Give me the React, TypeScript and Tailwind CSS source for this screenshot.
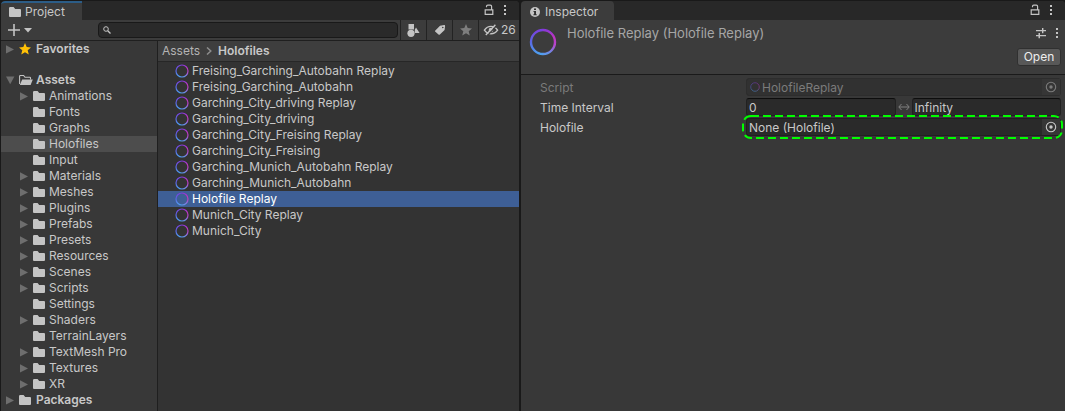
import React from "react";

type Folder = { name: string; children?: boolean };

const folders: Folder[] = [
  { name: "Animations", children: true },
  { name: "Fonts" },
  { name: "Graphs" },
  { name: "Holofiles" },
  { name: "Input" },
  { name: "Materials", children: true },
  { name: "Meshes", children: true },
  { name: "Plugins", children: true },
  { name: "Prefabs", children: true },
  { name: "Presets", children: true },
  { name: "Resources", children: true },
  { name: "Scenes", children: true },
  { name: "Scripts", children: true },
  { name: "Settings" },
  { name: "Shaders", children: true },
  { name: "TerrainLayers" },
  { name: "TextMesh Pro", children: true },
  { name: "Textures", children: true },
  { name: "XR", children: true },
];

const files = [
  "Freising_Garching_Autobahn Replay",
  "Freising_Garching_Autobahn",
  "Garching_City_driving Replay",
  "Garching_City_driving",
  "Garching_City_Freising Replay",
  "Garching_City_Freising",
  "Garching_Munich_Autobahn Replay",
  "Garching_Munich_Autobahn",
  "Holofile Replay",
  "Munich_City Replay",
  "Munich_City",
];

function FolderIcon() {
  return (
    <svg className="h-3 w-3 shrink-0" viewBox="0 0 12 12" fill="#c4c4c4" aria-hidden="true">
      <path d="M0 2.2Q0 1 1.2 1H4.6L6.2 3H11Q12 3 12 4V10Q12 11 11 11H1Q0 11 0 10Z" />
    </svg>
  );
}

function OpenFolderIcon() {
  return (
    <svg className="h-3 w-3.5 shrink-0" viewBox="0 0 14 12" aria-hidden="true">
      <path d="M.6 10V2.2Q.6 1.5 1.3 1.5H4.6L6 3.3H10.8Q11.5 3.3 11.5 4V5.5" fill="none" stroke="#c4c4c4" strokeWidth="1.1" />
      <path d="M3.2 5.4H13.8L11.6 11H.8Z" fill="#c4c4c4" />
    </svg>
  );
}

function Arrow({ open = false }: { open?: boolean }) {
  return (
    <svg className="h-2.5 w-2.5 shrink-0" viewBox="0 0 10 10" fill="#6e6e6e" aria-hidden="true">
      <path d={open ? "M1 1.5H9.4L5.2 9.2Z" : "M1 1.2V9.6L9 5.4Z"} />
    </svg>
  );
}

function Star({ className }: { className: string }) {
  return (
    <svg className={className} viewBox="0 0 12 12" fill="currentColor" aria-hidden="true">
      <path d="M6 0L7.7 4.1 12 4.4 8.7 7.2 9.8 11.6 6 9.2 2.2 11.6 3.3 7.2 0 4.4 4.3 4.1Z" />
    </svg>
  );
}

function Ring({ className, id, width = 1.2 }: { className: string; id: string; width?: number }) {
  return (
    <svg className={className} viewBox="0 0 14 14" aria-hidden="true">
      <defs>
        <linearGradient id={id + "-a"} x1="0" y1="0" x2="0" y2="1">
          <stop offset="0" stopColor="#7a3fdc" />
          <stop offset=".5" stopColor="#5a68e4" />
          <stop offset="1" stopColor="#4ea0f0" />
        </linearGradient>
        <linearGradient id={id + "-b"} x1="0" y1="0" x2="0" y2="1">
          <stop offset="0" stopColor="#8a38d8" />
          <stop offset=".3" stopColor="#c034c0" />
          <stop offset=".65" stopColor="#b44acc" />
          <stop offset="1" stopColor="#5c98ea" />
        </linearGradient>
      </defs>
      <path d="M7 1A6 6 0 0 0 7 13" fill="none" stroke={`url(#${id}-a)`} strokeWidth={width} />
      <path d="M7 1A6 6 0 0 1 7 13" fill="none" stroke={`url(#${id}-b)`} strokeWidth={width} />
    </svg>
  );
}

function LockIcon() {
  return (
    <svg className="h-3 w-2.5" viewBox="0 0 10 12" fill="none" stroke="#c4c4c4" strokeWidth="1.2" aria-hidden="true">
      <path d="M1.2 5.9H8.8V10.3H1.2ZM2.5 3.2V2.4Q2.5 1.1 3.8 1.1H6.3Q7.6 1.1 7.6 2.4V5.9" />
    </svg>
  );
}

function Dots() {
  return (
    <svg className="h-3 w-1" viewBox="0 0 4 12" fill="#c4c4c4" aria-hidden="true">
      <path d="M1 1H3V3H1ZM1 5H3V7H1ZM1 9H3V11H1Z" />
    </svg>
  );
}

function TargetIcon({ className }: { className: string }) {
  return (
    <svg className={className} viewBox="0 0 12 12" aria-hidden="true">
      <circle cx="6" cy="6" r="4.7" fill="none" stroke="currentColor" strokeWidth="1.1" />
      <circle cx="6" cy="6" r="1.7" fill="currentColor" />
    </svg>
  );
}

function TabActions() {
  return (
    <div className="flex items-center pb-px">
      <button aria-label="Lock" className="flex w-5 justify-center"><LockIcon /></button>
      <button aria-label="Tab menu" className="mr-2 flex w-3 justify-center"><Dots /></button>
    </div>
  );
}

const toolButton = "flex h-full w-[26px] shrink-0 items-center justify-center border-l border-[#232323]";

function ProjectPanel() {
  return (
    <section aria-label="Project" className="flex min-w-0 flex-col overflow-hidden rounded-t-sm bg-[#383838]">
      <div className="flex h-[19px] justify-between bg-[#282828]">
        <button className="flex w-[81px] items-center gap-1 rounded-tl-sm border-t-2 border-[#2c5d87] bg-[#3c3c3c] pl-2">
          <FolderIcon />
          <span>Project</span>
        </button>
        <TabActions />
      </div>
      <div className="flex h-[21px] items-center border-b border-[#1f1f1f] bg-[#3c3c3c]">
        <button aria-label="Create" className="flex w-[97px] items-center gap-1 pl-[7px]">
          <svg className="h-3 w-3" viewBox="0 0 12 12" fill="#c4c4c4"><path d="M5.2 0H6.8V5.2H12V6.8H6.8V12H5.2V6.8H0V5.2H5.2Z" /></svg>
          <svg className="h-2 w-2" viewBox="0 0 8 8" fill="#c4c4c4"><path d="M0 2H8L4 6.4Z" /></svg>
        </button>
        <label className="mr-[2px] flex h-4 min-w-0 flex-1 items-center rounded border border-[#191919] bg-[#2a2a2a] pl-1">
          <svg className="h-2 w-2 shrink-0" viewBox="0 0 8 8" fill="none" stroke="#c4c4c4" aria-hidden="true">
            <circle cx="3" cy="3" r="2.3" strokeWidth="1" /><path d="M4.7 4.7L7.5 7.5" strokeWidth="1.3" />
          </svg>
          <input aria-label="Search assets" className="min-w-0 flex-1 bg-transparent px-1 outline-none" />
        </label>
        <button aria-label="Search by type" className={toolButton}>
          <svg className="h-[13px] w-[13px]" viewBox="0 0 13 13" fill="#c4c4c4"><path d="M1.5 0H7V5.5H1.5ZM9 3.5L12.6 9H7.8V5.8Z" /><circle cx="4" cy="9.3" r="3.6" /></svg>
        </button>
        <button aria-label="Search by label" className={toolButton}>
          <svg className="h-3 w-3" viewBox="0 0 12 12" fill="#c4c4c4"><path fillRule="evenodd" d="M6 1.8L10.2 1Q11.2 .9 11.1 1.9L10.6 6L5.6 10.7Q5.2 11 4.8 10.7L1.1 7.5Q.7 7.1 1.1 6.7ZM8.8 2.7A.8.8 0 1 0 8.8 4.3 .8.8 0 1 0 8.8 2.7Z" /></svg>
        </button>
        <button aria-label="Save search" className={toolButton}><Star className="h-3 w-3 text-[#7d7d7d]" /></button>
        <button aria-label="Hidden packages, 26" className="flex h-full w-[41px] shrink-0 items-center gap-[2px] border-l border-[#232323] pl-1">
          <svg className="h-3.5 w-4 shrink-0" viewBox="0 0 16 14" fill="none" stroke="#c4c4c4" strokeWidth="1.4">
            <path d="M1.4 7.2Q4 3.4 8 3.4 12 3.4 14.6 7.2 12 10.8 8 10.8 4 10.8 1.4 7.2Z" />
            <circle cx="8" cy="7" r="2.3" fill="#c4c4c4" stroke="none" />
            <path d="M4 13L13.7 2.6" stroke="#3c3c3c" strokeWidth="1.3" />
            <path d="M2.8 12L12.4 1.8" strokeWidth="1.4" />
          </svg>
          <span>26</span>
        </button>
      </div>
      <div className="grid flex-1 grid-cols-[156fr_362fr]">
        <nav aria-label="Folders" className="flex min-w-0 flex-col">
          <button className="flex h-4 items-center pl-1 font-semibold">
            <Arrow /><Star className="ml-1 h-3 w-3 text-[#ffc107]" /><span className="ml-[5px]">Favorites</span>
          </button>
          <button className="mt-[15px] flex h-4 items-center pl-1 font-semibold">
            <Arrow open /><span className="ml-1"><OpenFolderIcon /></span><span className="ml-[3px]">Assets</span>
          </button>
          <ul>
            {folders.map((f) => (
              <li key={f.name}>
                <button className={"flex h-4 w-full items-center pl-[18px] " + (f.name === "Holofiles" ? "bg-[#4d4d4d]" : "")}>
                  <span className="mr-1 flex w-2.5">{f.children && <Arrow />}</span>
                  <FolderIcon />
                  <span className="ml-1">{f.name}</span>
                </button>
              </li>
            ))}
          </ul>
          <button className="flex h-4 items-center pl-1 font-semibold">
            <Arrow /><span className="ml-1"><FolderIcon /></span><span className="ml-[5px]">Packages</span>
          </button>
        </nav>
        <div className="flex min-w-0 flex-col border-l border-[#1f1f1f] bg-[#333333]">
          <nav aria-label="Breadcrumb" className="flex h-[21px] items-center border-b border-[#272727] bg-[#3e3e3e] pl-1">
            <a href="#assets" className="text-[#b4b4b4]">Assets</a>
            <svg className="mx-[6px] h-2 w-1.5" viewBox="0 0 6 8" fill="none" stroke="#8c8c8c" strokeWidth="1.5" aria-hidden="true"><path d="M1 0.5L4.8 4 1 7.5" /></svg>
            <a href="#holofiles" className="font-semibold">Holofiles</a>
          </nav>
          <ul className="pt-px">
            {files.map((name, i) => (
              <li key={name}>
                <button className={"flex h-4 w-full items-center gap-[3px] pl-[17px] " + (name === "Holofile Replay" ? "bg-[#3e5f96] text-white" : "")}>
                  <Ring id={`file${i}`} className="h-3.5 w-3.5 shrink-0" />
                  <span>{name}</span>
                </button>
              </li>
            ))}
          </ul>
        </div>
      </div>
    </section>
  );
}

const fieldRow = "grid h-[18px] grid-cols-[minmax(0,206fr)_minmax(0,315fr)] items-center";
const field = "h-[18px] min-w-0 flex-1 rounded-[3px] border border-[#212121] border-t-[#0d0d0d] bg-[#2a2a2a] px-[2px] pt-px";

function InspectorPanel() {
  return (
    <section aria-label="Inspector" className="flex min-w-0 flex-col overflow-hidden rounded-t-sm bg-[#383838]">
      <div className="flex h-[19px] justify-between bg-[#282828]">
        <button className="flex w-[93px] items-center gap-[5px] rounded-t-sm bg-[#3c3c3c] pt-[2px] pl-[9px]">
          <svg className="h-2.5 w-2.5 shrink-0" viewBox="0 0 10 10" aria-hidden="true">
            <circle cx="5" cy="5" r="5" fill="#c4c4c4" /><path d="M4 1.5H6V3H4ZM3.5 4H6V7.2H6.7V8.3H3.4V7.2H4.1V5H3.5Z" fill="#303030" />
          </svg>
          <span>Inspector</span>
        </button>
        <TabActions />
      </div>
      <header className="flex h-[55px] border-b border-[#1a1a1a] bg-[#3c3c3c] pl-2">
        <Ring id="header" className="mt-2 h-7 w-7 shrink-0" width={1.2} />
        <h1 className="mt-[5px] ml-[10px] flex-1 text-[13px]/4 text-[#a6a6a6]">Holofile Replay (Holofile Replay)</h1>
        <div className="flex flex-col items-end pt-[7px]">
          <div className="flex items-center gap-2 pr-[6px]">
            <button aria-label="Presets">
              <svg className="h-3 w-3" viewBox="0 0 12 12" fill="#c4c4c4"><path d="M1 3H7V1H8.4V3H11V4.3H8.4V6.2H7V4.3H1ZM1 8H3.5V6H5V8H11V9.3H5V11.3H3.5V9.3H1Z" /></svg>
            </button>
            <button aria-label="Component menu"><Dots /></button>
          </div>
          <button className="mt-[9px] mr-1 h-[18px] w-11 rounded-[3px] border border-[#303030] bg-[#585858] text-center text-[#eeeeee]">Open</button>
        </div>
      </header>
      <form className="flex flex-col gap-[2px] pt-[3px] pr-1 pl-[19px]">
        <div className={fieldRow + " text-[#7b7b7b]"}>
          <label htmlFor="script" className="pt-[2px]">Script</label>
          <div className="flex h-[18px] items-center rounded-[3px] border border-[#2d2d2d] bg-[#313131] pl-[3px]">
            <span className="flex opacity-50"><Ring id="script-ring" className="h-2.5 w-2.5" /></span>
            <input id="script" disabled defaultValue="HolofileReplay" className="ml-[2px] min-w-0 flex-1 pt-px" />
            <button type="button" disabled aria-label="Select script" className="flex h-4 w-[18px] items-center justify-center bg-[#363636]"><TargetIcon className="h-3 w-3" /></button>
          </div>
        </div>
        <div className={fieldRow}>
          <label htmlFor="from" className="pt-[2px]">Time Interval</label>
          <div className="flex items-center">
            <input id="from" defaultValue="0" className={field} />
            <svg className="mx-[2px] h-2 w-3 shrink-0" viewBox="0 0 12 8" fill="none" stroke="#808080" aria-hidden="true"><path d="M1 4H11M3.5 1L.8 4 3.5 7M8.5 1L11.2 4 8.5 7" /></svg>
            <input aria-label="Time interval end" defaultValue="Infinity" className={field} />
          </div>
        </div>
        <div className={fieldRow}>
          <label htmlFor="holofile" className="pt-[2px]">Holofile</label>
          <div className="relative">
            <div className="flex h-[18px] items-center rounded-[3px] border border-[#212121] bg-[#2a2a2a]">
              <input id="holofile" defaultValue="None (Holofile)" className="min-w-0 flex-1 px-[2px] pt-px" />
              <button type="button" aria-label="Select holofile" className="flex h-4 w-[18px] items-center justify-center bg-[#363636]"><TargetIcon className="h-3 w-3" /></button>
            </div>
            <svg className="pointer-events-none absolute -top-[3px] -left-1 h-6 w-[calc(100%+6px)] overflow-visible" aria-hidden="true">
              <rect x="1" y="1" width="calc(100% - 2px)" height="22" rx="8" fill="none" stroke="#00ff00" strokeWidth="2" strokeDasharray="8 4" />
            </svg>
          </div>
        </div>
      </form>
    </section>
  );
}

export default function App() {
  return (
    <main className="grid min-h-screen grid-cols-[minmax(0,518fr)_minmax(0,544fr)] gap-[2px] bg-[#191919] pt-px pl-px font-['Inter',sans-serif] text-[12px]/4 text-[#c8c8c8]">
      <ProjectPanel />
      <InspectorPanel />
    </main>
  );
}
